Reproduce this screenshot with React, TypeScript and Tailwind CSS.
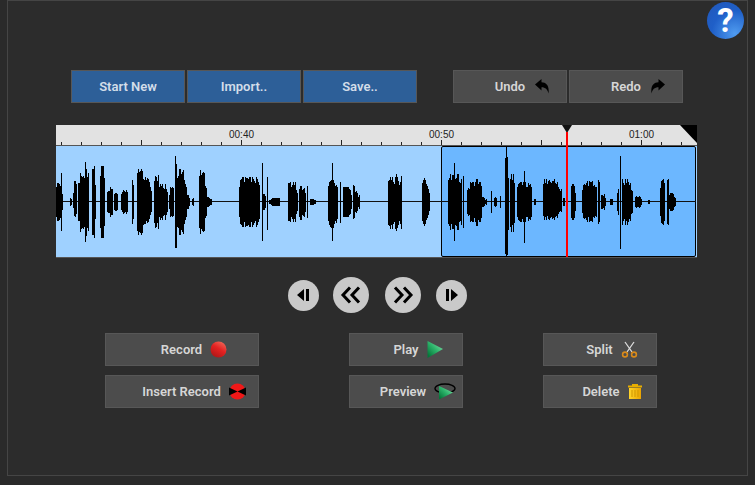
import React from "react";

// x0, x1, top, bottom (px from centre line), peak position 0..1
const clusters: number[][] = [
  [56, 63, 19, 19, 0.2], [70, 72, 4, 4, 0.5], [73, 77, 22, 15, 0.7], [78, 89, 33, 34, 0.6], [92, 96, 37, 37, 0.4],
  [100, 105, 36, 36, 0.5], [107, 113, 15, 15, 0.5], [114, 118, 9, 9, 0.5], [121, 128, 13, 13, 0.5], [132, 134, 29, 29, 0.5],
  [137, 145, 35, 35, 0.4], [145, 152, 30, 26, 0.2], [154, 160, 27, 27, 0.4], [160, 168, 18, 18, 0.4], [169, 174, 15, 15, 0.6],
  [175, 178, 42, 44, 0.5], [178, 187, 33, 33, 0.2], [187, 190, 8, 8, 0.2], [192, 194, 4, 4, 0.5], [199, 207, 32, 32, 0.3],
  [207, 212, 5, 5, 0.1], [239, 260, 25, 25, 0.5], [263, 266, 10, 10, 0.3], [269, 280, 4, 4, 0.7], [288, 298, 20, 20, 0.4],
  [299, 306, 16, 18, 0.4], [310, 316, 3, 3, 0.3], [328, 338, 22, 26, 0.5], [340, 341, 26, 27, 0.5], [343, 352, 15, 15, 0.4],
  [353, 355, 25, 25, 0.5], [355, 360, 12, 12, 0], [388, 401, 25, 27, 0.5], [422, 430, 22, 22, 0.3], [448, 462, 28, 28, 0.5],
  [463, 464, 34, 34, 0.5], [467, 482, 20, 20, 0.6], [476, 478, 32, 33, 0.5], [482, 487, 5, 5, 0], [491, 492, 18, 18, 0.5],
  [494, 497, 5, 5, 0.5], [500, 501, 10, 10, 0.5], [505, 509, 45, 53, 0.4], [510, 515, 28, 30, 0.5], [517, 532, 20, 20, 0.5],
  [534, 536, 3, 3, 0.5], [543, 562, 23, 18, 0.3], [563, 565, 5, 5, 0.5], [571, 576, 18, 18, 0.3], [582, 597, 21, 20, 0.5],
  [598, 600, 30, 30, 0.5], [601, 606, 8, 8, 0.4], [610, 613, 3, 3, 0.5], [617, 619, 15, 15, 0.5], [622, 633, 23, 23, 0.3],
  [635, 642, 6, 6, 0.3], [648, 650, 2, 2, 0.5], [660, 665, 25, 25, 0.5], [667, 669, 30, 30, 0.5], [669, 676, 9, 9, 0.2],
];
// single tall columns
const spikes: number[][] = [
  [61, 29, 29], [85, 40, 40], [102, 36, 36], [175, 46, 46], [176, 38, 46], [262, 39, 39], [267, 25, 28], [307, 16, 16],
  [332, 39, 39], [401, 26, 27], [396, 28, 29], [424, 24, 24], [454, 39, 39], [506, 55, 55], [524, 31, 41], [620, 46, 47],
];

function wavePath() {
  const h: Record<number, [number, number]> = {};
  const put = (x: number, t: number, b: number) => {
    const c = h[x] ?? [0, 0];
    h[x] = [Math.max(c[0], t), Math.max(c[1], b)];
  };
  clusters.forEach(([x0, x1, top, bot, peak]) => {
    for (let x = x0; x < x1; x++) {
      const p = (x - x0) / Math.max(1, x1 - x0 - 1);
      const env = Math.min(1, 1.7 * (1 - Math.abs(p - peak) * 1.1));
      const j = Math.abs(Math.sin(x * 12.9898) * 43.7) % 1;
      const k = Math.max(0.5, env) * (0.7 + 0.38 * j);
      put(x, Math.min(top, Math.ceil(top * k)), Math.min(bot, Math.ceil(bot * k)));
    }
  });
  spikes.forEach(([x, t, b]) => put(x, t, b));
  return Object.entries(h)
    .map(([x, [t, b]]) => `M${Number(x) - 56 + 0.5} ${56 - t}V${56 + b}`)
    .join("");
}

const ticks = Array.from({ length: 32 }, (_, i) => 5 + i * 20);

function Btn({ w = "w-[114px]", blue, children }: { w?: string; blue?: boolean; children: React.ReactNode }) {
  return (
    <button
      className={`${w} h-[33px] flex items-center justify-center gap-2 border text-[13px] font-semibold ${
        blue
          ? "bg-[#2d5f98] border-[#575757] text-[#d3dde9]"
          : "bg-[#4c4c4c] border-[#575757] text-[#d6d6d6] pl-6"
      }`}
    >
      {children}
    </button>
  );
}

function Round({ big, className = "", children }: { big?: boolean; className?: string; children: React.ReactNode }) {
  return (
    <button
      className={`${big ? "w-9 h-9" : "w-[31px] h-[31px]"} ${className} rounded-full bg-[#c9c9c9] flex items-center justify-center`}
    >
      {children}
    </button>
  );
}

const Ball = ({ cross }: { cross?: boolean }) => (
  <svg width="17" height="17" viewBox="0 0 17 17">
    <defs>
      <linearGradient id={cross ? "rb2" : "rb1"} x1="0.8" y1="0" x2="0.2" y2="1">
        <stop offset="0" stopColor="#f06a5a" />
        <stop offset="0.45" stopColor="#e52222" />
        <stop offset="1" stopColor="#a81616" />
      </linearGradient>
    </defs>
    <circle cx="8.5" cy="8.5" r="8" fill={cross ? "#f01818" : "url(#rb1)"} />
    {cross && <path d="M0 4.5L8.5 8.5L0 12.5ZM17 4.5L8.5 8.5L17 12.5Z" fill="#000" />}
  </svg>
);

const PlayTri = () => (
  <svg width="16" height="17" viewBox="0 0 16 17">
    <defs>
      <linearGradient id="pt" x1="0.9" y1="0.1" x2="0.1" y2="0.9">
        <stop offset="0" stopColor="#7fe0a8" />
        <stop offset="0.5" stopColor="#2cb36a" />
        <stop offset="1" stopColor="#05773a" />
      </linearGradient>
    </defs>
    <path d="M0.5 0L16 8L0.5 17Z" fill="url(#pt)" />
  </svg>
);

const PreviewIcon = () => (
  <svg width="22" height="17" viewBox="0 0 22 17">
    <defs>
      <linearGradient id="pv" x1="0.9" y1="0.1" x2="0.1" y2="0.9">
        <stop offset="0" stopColor="#7fe0a8" />
        <stop offset="0.5" stopColor="#2cb36a" />
        <stop offset="1" stopColor="#05773a" />
      </linearGradient>
    </defs>
    <ellipse cx="11" cy="5.5" rx="10" ry="4.5" fill="none" stroke="#000" strokeWidth="1.4" />
    <path d="M5 3L19 9.5L5 16.5Z" fill="url(#pv)" />
  </svg>
);

const Scissors = () => (
  <svg width="17" height="17" viewBox="0 0 17 17" fill="none">
    <path d="M4 1L11 11M13 1L6 11" stroke="#dcdcdc" strokeWidth="1.3" />
    <circle cx="4" cy="13.5" r="2.4" stroke="#d98a1a" strokeWidth="1.6" />
    <circle cx="13" cy="13.5" r="2.4" stroke="#d98a1a" strokeWidth="1.6" />
  </svg>
);

const Trash = () => (
  <svg width="14" height="15" viewBox="0 0 14 15">
    <defs>
      <linearGradient id="tr" x1="0" y1="0" x2="1" y2="0">
        <stop offset="0" stopColor="#ffd42a" />
        <stop offset="1" stopColor="#eaa400" />
      </linearGradient>
    </defs>
    <path d="M4 0H10V1.5H14V3.5H0V1.5H4Z" fill="#e8ae00" />
    <path d="M1 4H13V15H1Z" fill="url(#tr)" />
    <path d="M4 6V13M7 6V13M10 6V13" stroke="#cf9700" strokeWidth="1" />
  </svg>
);

const Undo = ({ flip }: { flip?: boolean }) => (
  <svg width="14" height="15" viewBox="0 0 14 15" className={flip ? "-scale-x-100" : ""}>
    <path d="M0 5.5L6.5 0V3.2C11.5 3.2 14.5 7 13.5 14.5C12.5 10.5 10.5 8.3 6.5 8.3V11.5Z" fill="#000" />
  </svg>
);

export default function App() {
  return (
    <div className="w-[755px] h-[485px] bg-[#2a2a2a] overflow-hidden pl-[7px]" style={{ fontFamily: 'Roboto, "Liberation Sans", Arial, sans-serif' }}>
      <div className="relative w-[741px] h-[476px] border border-[#454545] bg-[#2c2c2c] flex flex-col pt-[69px]">
        <div className="absolute right-[3px] top-[1px] w-[37px] h-[37px] rounded-full bg-[radial-gradient(circle_at_75%_85%,#4f9bf0,#1f5fc8_55%,#2257b8)] flex items-center justify-center text-white font-bold text-[33px] leading-none">
          ?
        </div>

        <div className="flex pl-[63px]">
          <div className="flex gap-[2px]">
            <Btn blue>Start New</Btn>
            <Btn blue>Import..</Btn>
            <Btn blue>Save..</Btn>
          </div>
          <div className="flex gap-[2px] ml-9">
            <Btn>
              Undo <span className="ml-0.5"><Undo /></span>
            </Btn>
            <Btn>
              Redo <span className="ml-0.5"><Undo flip /></span>
            </Btn>
          </div>
        </div>

        <div className="relative ml-[48px] mt-[22px] w-[641px] h-[133px]">
          <div className="relative h-[21px] bg-[#e2e2e2] border-b border-[#555]">
            <svg width="641" height="20" className="absolute left-0 top-0">
              {ticks.map((x) => (
                <rect
                  key={x}
                  x={x}
                  y={(x - 5) % 100 === 80 ? 15 : 17}
                  width="1"
                  height={(x - 5) % 100 === 80 ? 5 : 3}
                  fill="#222"
                />
              ))}
              <path d="M624 0H641V18Z" fill="#000" />
            </svg>
            <span className="absolute left-[173px] top-[2px] text-[10px] text-[#222] font-['Liberation_Sans']">00:40</span>
            <span className="absolute left-[373px] top-[2px] text-[10px] text-[#222] font-['Liberation_Sans']">00:50</span>
            <span className="absolute left-[573px] top-[2px] text-[10px] text-[#222] font-['Liberation_Sans']">01:00</span>
          </div>

          <div className="relative h-[112px] bg-[#9fd1ff] border-b border-[#555]">
            <div className="absolute left-[385px] top-0 w-[255px] h-[111px] bg-[#6cb7ff] border border-black rounded-[2px]" />
            <svg width="641" height="112" className="absolute left-0 top-0" shapeRendering="crispEdges">
              <rect x="0" y="55" width="640" height="1" fill="#111" />
              <path d={wavePath()} stroke="#000" strokeWidth="1" fill="none" />
            </svg>
          </div>

          <svg width="12" height="133" className="absolute left-[505px] top-0">
            <path d="M1 0H11L6 8Z" fill="#111" />
            <rect x="5" y="7" width="2" height="125" fill="#ff0000" />
          </svg>
        </div>

        <div className="flex items-center gap-[15px] pl-[280px] mt-[19px]">
          <Round className="-mr-px">
            <svg width="15" height="14" viewBox="0 0 15 14"><path d="M8 1V13L1 7ZM10 1H13V13H10Z" fill="#000" /></svg>
          </Round>
          <Round big className="mr-px">
            <svg width="22" height="18" viewBox="0 0 22 18" fill="none" stroke="#000" strokeWidth="3"><path d="M10 1.5L3 9L10 16.5M19 1.5L12 9L19 16.5" /></svg>
          </Round>
          <Round big>
            <svg width="22" height="18" viewBox="0 0 22 18" fill="none" stroke="#000" strokeWidth="3"><path d="M3 1.5L10 9L3 16.5M12 1.5L19 9L12 16.5" /></svg>
          </Round>
          <Round>
            <svg width="15" height="14" viewBox="0 0 15 14"><path d="M2 1H5V13H2ZM7 1L14 7L7 13Z" fill="#000" /></svg>
          </Round>
        </div>

        <div className="grid grid-cols-[244px_194px_114px] gap-y-[9px] pl-[97px] pt-5">
          <Btn w="w-[154px]">Record <Ball /></Btn>
          <Btn>Play <PlayTri /></Btn>
          <Btn>Split <Scissors /></Btn>
          <Btn w="w-[154px]">Insert Record <Ball cross /></Btn>
          <Btn>Preview <PreviewIcon /></Btn>
          <Btn>Delete <Trash /></Btn>
        </div>
      </div>
    </div>
  );
}
